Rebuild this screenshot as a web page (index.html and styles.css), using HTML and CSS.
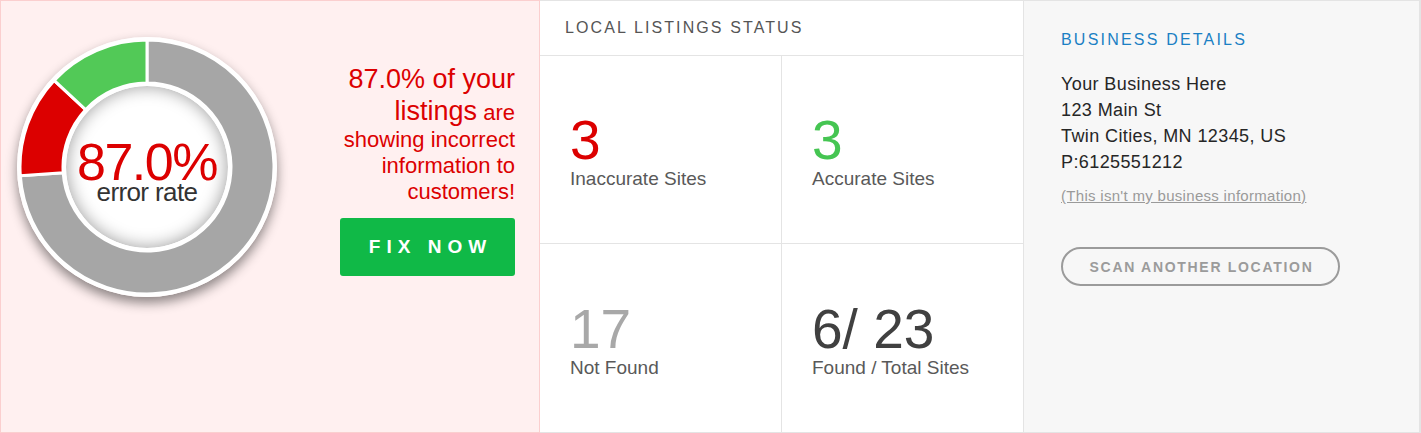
FILE: index.html
```html
<!DOCTYPE html>
<html lang="en">
<head>
<meta charset="utf-8">
<title>Listings Scan</title>
<link rel="stylesheet" href="styles.css">
</head>
<body>
<div class="report">
  <section class="summary">
    <div class="donut">
      <svg class="ring" width="260" height="260" viewBox="0 0 260 260" aria-hidden="true">
        <circle cx="130" cy="130" r="130" fill="#ffffff"/>
        <path d="M130,3 A127,127 0 1 1 3.31,138.86 L46.20,135.86 A84,84 0 1 0 130,46 Z" fill="#a6a6a6" stroke="#fff" stroke-width="3" stroke-linejoin="round"/>
        <path d="M3.31,138.86 A127,127 0 0 1 37.12,43.39 L68.57,72.71 A84,84 0 0 0 46.20,135.86 Z" fill="#dc0000" stroke="#fff" stroke-width="3" stroke-linejoin="round"/>
        <path d="M37.12,43.39 A127,127 0 0 1 130,3 L130,46 A84,84 0 0 0 68.57,72.71 Z" fill="#52c957" stroke="#fff" stroke-width="3" stroke-linejoin="round"/>
      </svg>
      <div class="hole">
        <div class="pct">87.0%</div>
        <div class="err">error rate</div>
      </div>
    </div>
    <div class="pitch">
      <p class="pitch-text"><span class="big">87.0% of your</span><br><span class="big">listings</span> are<br>showing incorrect<br>information to<br>customers!</p>
      <a class="fix-btn" href="#">FIX NOW</a>
    </div>
  </section>

  <section class="status">
    <div class="status-head">LOCAL LISTINGS STATUS</div>
    <div class="status-grid">
      <div class="cell">
        <div class="num num-red">3</div>
        <div class="label">Inaccurate Sites</div>
      </div>
      <div class="cell cell-right">
        <div class="num num-green">3</div>
        <div class="label">Accurate Sites</div>
      </div>
      <div class="cell cell-bottom">
        <div class="num num-gray">17</div>
        <div class="label">Not Found</div>
      </div>
      <div class="cell cell-right cell-bottom">
        <div class="num num-dark">6/ 23</div>
        <div class="label">Found / Total Sites</div>
      </div>
    </div>
  </section>

  <section class="details">
    <h2 class="details-head">BUSINESS DETAILS</h2>
    <div class="address">
      <div>Your Business Here</div>
      <div>123 Main St</div>
      <div>Twin Cities, MN 12345, US</div>
      <div>P:6125551212</div>
    </div>
    <a class="not-mine" href="#">(This isn't my business information)</a>
    <a class="scan-btn" href="#">SCAN ANOTHER LOCATION</a>
  </section>
</div>
</body>
</html>
```
FILE: styles.css
```css
* { box-sizing: border-box; }

html, body {
  margin: 0;
  padding: 0;
  background: #ffffff;
}

body {
  font-family: "Liberation Sans", Arial, Helvetica, sans-serif;
  width: 1421px;
  height: 433px;
  overflow: hidden;
}

.report {
  display: flex;
  width: 1421px;
  height: 433px;
}

/* ---------- left summary ---------- */
.summary {
  width: 540px;
  height: 433px;
  background: #fff0f0;
  border: 1px solid #fbcfcf;
  display: flex;
  align-items: flex-start;
  padding: 36px 24px 0 16px;
}

.donut {
  position: relative;
  width: 260px;
  height: 260px;
  border-radius: 50%;
  box-shadow: 0 6px 12px rgba(0, 0, 0, 0.45);
  display: flex;
  align-items: center;
  justify-content: center;
  flex: none;
}

.ring {
  position: absolute;
  left: 0;
  top: 0;
  display: block;
}

.hole {
  position: relative;
  width: 168px;
  height: 168px;
  border-radius: 50%;
  background: #ffffff;
  border: 3px solid #ffffff;
  box-shadow: inset 0 0 17px rgba(0, 0, 0, 0.4);
  display: flex;
  flex-direction: column;
  align-items: center;
  justify-content: center;
  padding-top: 10px;
}

.pct {
  color: #dc0000;
  font-size: 52px;
  line-height: 40px;
  letter-spacing: -1.5px;
}

.err {
  color: #333333;
  font-size: 26px;
  line-height: 20px;
  letter-spacing: -0.6px;
}

.pitch {
  margin-left: auto;
  width: 176px;
  display: flex;
  flex-direction: column;
  align-items: flex-end;
}

.pitch-text {
  margin: 26px 0 0;
  color: #dc0000;
  font-size: 22px;
  line-height: 26px;
  text-align: right;
}

.big {
  font-size: 27px;
  line-height: 32px;
}

.fix-btn {
  margin-top: 13px;
  width: 175px;
  height: 58px;
  background: #10b947;
  border-radius: 3px;
  color: #ffffff;
  font-weight: bold;
  font-size: 19px;
  letter-spacing: 6px;
  padding-left: 6px;
  text-decoration: none;
  display: flex;
  align-items: center;
  justify-content: center;
}

/* ---------- middle status ---------- */
.status {
  width: 484px;
  height: 433px;
  background: #ffffff;
  border-top: 1px solid #e4e4e4;
  border-bottom: 1px solid #e4e4e4;
  border-right: 1px solid #e4e4e4;
  display: flex;
  flex-direction: column;
}

.status-head {
  height: 55px;
  line-height: 54px;
  border-bottom: 1px solid #e4e4e4;
  padding-left: 25px;
  font-size: 16px;
  letter-spacing: 2.1px;
  color: #555555;
}

.status-grid {
  flex: 1;
  display: grid;
  grid-template-columns: 242px 241px;
  grid-template-rows: 188px 188px;
}

.cell {
  display: flex;
  flex-direction: column;
  justify-content: center;
  padding: 3px 0 0 30px;
  border-right: 1px solid #e4e4e4;
  border-bottom: 1px solid #e4e4e4;
}

.cell-right {
  border-right: none;
}

.cell-bottom {
  border-bottom: none;
}

.num {
  font-size: 55px;
  line-height: 56px;
}

.num-red { color: #dc0000; }
.num-green { color: #45c552; }
.num-gray { color: #a8a8a8; }
.num-dark { color: #404040; }

.label {
  font-size: 19px;
  line-height: 22px;
  color: #595959;
}

/* ---------- right details ---------- */
.details {
  width: 397px;
  height: 433px;
  background: #f7f7f7;
  border-top: 1px solid #e4e4e4;
  border-right: 2px solid #e4e4e4;
  border-bottom: 1px solid #e4e4e4;
  padding: 29px 0 0 37px;
  display: flex;
  flex-direction: column;
  align-items: flex-start;
}

.details-head {
  margin: 0;
  font-weight: normal;
  font-size: 16px;
  line-height: 20px;
  letter-spacing: 2.2px;
  color: #1b80c4;
}

.address {
  margin-top: 21px;
  font-size: 18px;
  line-height: 26px;
  letter-spacing: 0.4px;
  color: #262626;
}

.not-mine {
  margin-top: 11px;
  font-size: 15px;
  line-height: 20px;
  letter-spacing: 0.3px;
  color: #9a9a9a;
  text-decoration: underline;
}

.scan-btn {
  margin-top: 41px;
  width: 279px;
  height: 39px;
  border: 2px solid #9b9b9b;
  border-radius: 20px;
  color: #9b9b9b;
  font-weight: bold;
  font-size: 14px;
  letter-spacing: 1.7px;
  padding-left: 2px;
  text-decoration: none;
  display: flex;
  align-items: center;
  justify-content: center;
}
```
